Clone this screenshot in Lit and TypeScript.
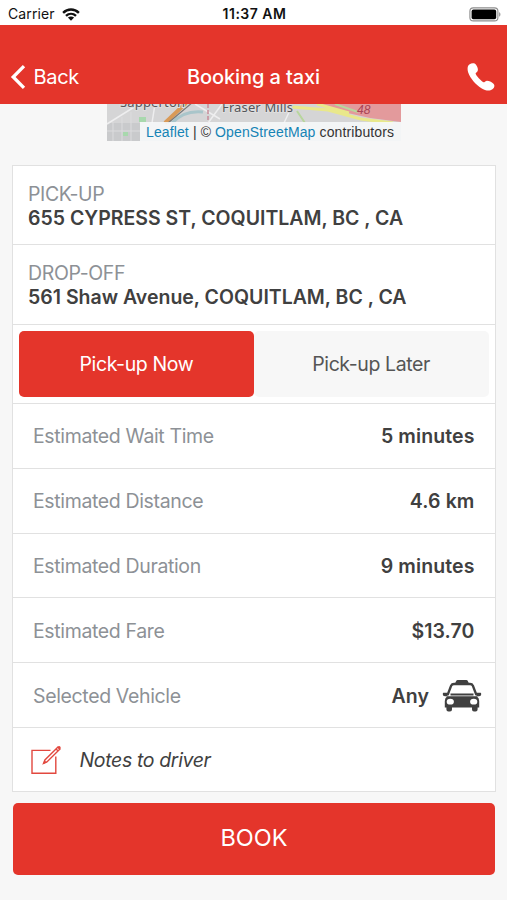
import { LitElement, html, css, svg } from "lit";
import { customElement, state } from "lit/decorators.js";

const wifi = svg`<svg class="wifi" viewBox="0 0 18 13" width="18" height="13">
  <g fill="none" stroke="#111" stroke-width="2.4">
    <path d="M1.100 4.800C5.600.4 12.400.4 16.900 4.800"/>
    <path d="M4 7.900c2.900-2.700 7.100-2.700 10 0"/>
  </g>
  <path d="M5.900 9.600c1.800-1.600 4.400-1.600 6.200 0L9 12.700z" fill="#111"/>
</svg>`;

const battery = svg`<svg class="battery" viewBox="0 0 32 15" width="32" height="15">
  <rect x=".9" y=".9" width="28" height="13" rx="3.4" fill="#fff" stroke="#8d8d8d" stroke-width="1.1"/>
  <rect x="2.6" y="2.6" width="24.6" height="9.6" rx="1.8" fill="#000"/>
  <path d="M30.2 5.3c1.6.6 1.6 3.8 0 4.4z" fill="#8d8d8d"/>
</svg>`;

const chevron = svg`<svg viewBox="0 0 16 24" width="16" height="24">
  <path d="M14 1.200 3.200 12 14 22.800" fill="none" stroke="#fff" stroke-width="3.300"/>
</svg>`;

const phone = svg`<svg viewBox="0 0 28 28" width="28" height="28">
  <path fill="#fff" d="M2.300 1.600C4.600-.1 7.500-.2 9 1.700c1.700 2.200 2.400 5 1.500 6.500-.5.900-1.900 1.500-1.900 2.300 0 1.500 5.900 8.200 7.900 8.700.9.200 1.700-1.100 2.900-1.300 1.900-.3 5.100 1 7.100 2.800 1.600 1.500.9 4.100-1.100 5.600-2.800 2.100-6.900 1.500-11-1.100C8.600 21.500 3.300 15.300 1.200 9.500.2 6.500.3 3.200 2.300 1.600z"/>
</svg>`;

const taxi = svg`<svg viewBox="0 0 40 34" width="40" height="34">
  <path fill="#404040" d="M13 4.500 14.200 1.900Q14.600 1.100 15.600 1.100h8.800q1 0 1.400.8L27 4.500z"/>
  <path fill="none" stroke="#404040" stroke-width="2.300" d="M5.600 16 9.100 6.800Q9.900 5 12 5h16q2.100 0 2.900 1.800L34.400 16"/>
  <path fill="#404040" d="M1.400 13.700H5q1 0 1 1.200l-.6 2.600-3.700-.6Q.6 16.100.8 14.800.9 13.800 1.400 13.700zM38.600 13.700H35q-1 0-1 1.200l.6 2.600 3.700-.6q1.100-.8.900-2.100-.1-1-.6-1.100zM8.500 14.400h23v2.100h-23z"/>
  <path fill="#404040" fill-rule="evenodd" d="M5.300 17.300h29.400q2.500 1.500 2.500 4.700v6.400H2.800V22q0-3.200 2.500-4.700zM4.700 22.700a3.600 2.900 0 1 0 7.200 0a3.600 2.900 0 1 0-7.200 0zM28.100 22.700a3.600 2.900 0 1 0 7.200 0a3.600 2.900 0 1 0-7.200 0z"/>
  <path fill="#404040" d="M4.400 27H10v3.500q0 2.100-2 2.100H6.400q-2 0-2-2.100zM30 27h5.600v3.500q0 2.100-2 2.100H32q-2 0-2-2.100z"/>
</svg>`;

const pencil = svg`<svg viewBox="0 0 31 30" width="31" height="30">
  <g fill="none" stroke="#e2483f" stroke-width="1.400">
    <path d="M19.500 5.400H1V28.300H24.800V11.500"/>
    <path d="m12.500 18.400 1.400-3.400L27 2.100l2 2L15.900 17zM25.100 4l2 2"/>
  </g>
  <path fill="#e2483f" d="m12.100 19 1.300-3.800 2.500 2.300zM26.300 2.600l1.300-1.400q.8-.5 1.600.2.900.9.300 1.800L28.200 4.600z"/>
</svg>`;

@customElement("app-root")
export class AppRoot extends LitElement {
  static styles = css`
    :host { display: flex; flex-direction: column; box-sizing: border-box; width: 100%; height: 900px;
      overflow: hidden; background: #f7f7f7; color: #404040; font-family: Inter, "Liberation Sans", sans-serif;
      font-size: 19.500px; line-height: 24px; }
    * { box-sizing: border-box; }
    svg { display: block; flex: none; }
    button { font: inherit; letter-spacing: inherit; color: inherit; border: 0; padding: 0; cursor: pointer; }
    .status { display: grid; grid-template-columns: 1fr auto 1fr; align-items: center; height: 25px; flex: none;
      padding: 2px 6px 0 8px; background: #fff; color: #111; font-size: 14px; }
    .carrier { display: flex; align-items: center; gap: 7px; letter-spacing: .12px; }
    .clock { font-weight: 600; letter-spacing: .5px; }
    .battery { justify-self: end; }
    .nav { display: grid; grid-template-columns: 1fr auto 1fr; align-items: center; height: 78.500px; flex: none;
      padding: 25px 12px 0 10px; background: #e4352b; color: #fff; font-size: 20px; }
    .back { display: flex; align-items: center; gap: 7.500px; background: none; justify-self: start; letter-spacing: -.3px; }
    .call { background: none; justify-self: end; }
    .title { font-weight: 500; letter-spacing: -.1px; margin-left: 2px; }
    .map { position: relative; width: 294px; height: 37.500px; margin: 0 0 23.500px 107px; flex: none; overflow: hidden; }
    .attribution { position: absolute; right: 0; bottom: 0; width: 261px; height: 19px; padding-left: 6px;
      background: rgba(247, 249, 250, .88); font: 14px/20px "Liberation Sans", sans-serif; letter-spacing: .12px;
      color: #333; white-space: nowrap; }
    .attribution a { color: #1583b5; }
    .card { margin: 0 11.500px 0 12px; border: 1.500px solid #e1e1e1; background: #fff; flex: none; }
    .address { height: 79.500px; padding: 16px 15px 0; border-bottom: 1.500px solid #e1e1e1; }
    .label { color: #8d9196; letter-spacing: -.36px; }
    .value { font-weight: 600; }
    .tabs { display: flex; height: 79.500px; padding: 6px; border-bottom: 1.500px solid #e1e1e1; }
    .tab { flex: 1; background: #f7f7f7; border-radius: 5px; height: 66px; color: #555; letter-spacing: -.4px; }
    .tab.active { background: #e4352b; color: #fff; }
    .row { display: flex; align-items: center; justify-content: space-between; height: 64.800px;
      padding: 1px 20px 0; border-bottom: 1.500px solid #e1e1e1; }
    .row .value { letter-spacing: .1px; }
    .vehicle { display: flex; align-items: center; gap: 12.500px; margin-right: -7px; }
    .notes { display: flex; align-items: center; gap: 17.500px; height: 63.500px; padding: 1px 18px 0;
      font-style: italic; letter-spacing: -.36px; }
    .book { height: 72px; margin: 11px 12px 0 13px; flex: none; border-radius: 5px; background: #e4352b; color: #fff;
      font-size: 23.500px; padding-bottom: 2px; }
  `;

  @state() private later = false;

  private estimates = [
    ["Estimated Wait Time", "5 minutes"],
    ["Estimated Distance", "4.6 km"],
    ["Estimated Duration", "9 minutes"],
    ["Estimated Fare", "$13.70"],
  ];

  render() {
    return html`
      <div class="status">
        <div class="carrier"><span>Carrier</span>${wifi}</div>
        <span class="clock">11:37 AM</span>${battery}
      </div>
      <header class="nav">
        <button class="back">${chevron}<span>Back</span></button>
        <span class="title">Booking a taxi</span>
        <button class="call" aria-label="Call">${phone}</button>
      </header>
      <div class="map">
        <svg viewBox="0 0 294 37.500" width="294" height="37.500">
          <path fill="#d5d5d6" d="M0 0h294v38H0z"/>
          <path fill="#c9cacc" d="M0 19h33v19H0z"/>
          <path fill="none" stroke="#dcdcde" stroke-width="1" d="M6 18v20M15 13v25M24 8v30M0 27h33"/>
          <path fill="none" stroke="#eeeeef" stroke-width="1.500" d="M0 20 32 0M48 0 45 19M88 0 113 15M115 0 101 19M184 4l-7 15"/>
          <path fill="none" stroke="#a9c5ca" stroke-width="3" d="M65 19Q77 6 96 8"/>
          <path fill="none" stroke="#d99a58" stroke-width="4" d="M58 19 79-1"/>
          <path fill="none" stroke="#777" stroke-width="1.200" d="M61 19 86-2"/>
          <path fill="none" stroke="#c78c99" stroke-width="1.500" stroke-dasharray="4 2" d="M101 0v19"/>
          <path fill="#e39a9c" d="M211 0h83v18l-31-4-36-8z"/>
          <path fill="none" stroke="#e9e88b" stroke-width="3" d="M185 3l36 3 33 9 32 4M210 0l32 9"/>
          <path fill="none" stroke="#b8d69d" stroke-width="2" d="M190 7l8 12M228 0l23 8"/>
          <path fill="#a8d8ad" d="M32 13h7v5h-7zM16 28h5v4h-5z"/>
          <g font-family="Noto Sans, sans-serif" font-size="13" fill="#55565a" stroke="#dedede" stroke-width="2" paint-order="stroke">
            <text x="13" y="3" textLength="65">Sapperton</text>
            <text x="115" y="7.500" textLength="71">Fraser Mills</text>
          </g>
          <text x="250" y="10" font-family="Liberation Sans, sans-serif" font-style="italic" font-size="12" fill="#a84455">48</text>
        </svg>
        <div class="attribution"><a>Leaflet</a> | © <a>OpenStreetMap</a> contributors</div>
      </div>
      <main class="card">
        <section class="address"><div class="label">PICK-UP</div><div class="value">655 CYPRESS ST, COQUITLAM, BC , CA</div></section>
        <section class="address"><div class="label">DROP-OFF</div><div class="value">561 Shaw Avenue, COQUITLAM, BC , CA</div></section>
        <div class="tabs">
          <button class="tab ${this.later ? "" : "active"}" @click=${() => (this.later = false)}>Pick-up Now</button>
          <button class="tab ${this.later ? "active" : ""}" @click=${() => (this.later = true)}>Pick-up Later</button>
        </div>
        ${this.estimates.map(([label, value]) => html`
          <div class="row"><span class="label">${label}</span><span class="value">${value}</span></div>`)}
        <div class="row"><span class="label">Selected Vehicle</span>
          <div class="vehicle"><span class="value">Any</span>${taxi}</div></div>
        <div class="notes">${pencil}<span>Notes to driver</span></div>
      </main>
      <button class="book">BOOK</button>
    `;
  }
}
